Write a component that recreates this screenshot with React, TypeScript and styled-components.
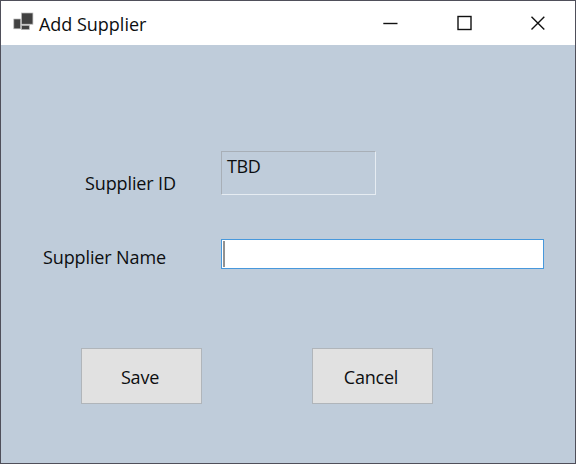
import React, { useState } from 'react';
import styled, { createGlobalStyle } from 'styled-components';

const GlobalStyle = createGlobalStyle`
  * { box-sizing: border-box; }
  html, body { margin: 0; padding: 0; overflow: hidden; }
  body, input, button { font-family: "Open Sans", "Noto Sans", sans-serif; font-size: 18px; color: #0c0e10; }
`;

const Window = styled.div`
  width: 576px;
  height: 464px;
  display: flex;
  flex-direction: column;
  background: #bfccda;
  border: 1px solid #4f4f5a;
`;

const TitleBar = styled.header`
  flex: none;
  height: 44px;
  display: flex;
  align-items: center;
  padding-left: 12px;
  background: #fff;
`;

const AppIcon = styled.svg`
  display: block;
  flex: none;
  width: 21px;
  height: 20px;
  margin: 0 5px 2px 0;
`;

const Title = styled.h1`
  margin: 0 auto 0 0;
  padding-top: 1px;
  font-size: 18px;
  font-weight: 400;
  line-height: 24px;
  white-space: nowrap;
  letter-spacing: -0.02px;
`;

const Controls = styled.div`
  display: flex;
  height: 100%;
`;

const ControlButton = styled.button`
  width: 73.5px;
  height: 44px;
  padding: 0;
  border: 0;
  background: transparent;
  svg { display: block; margin: -1px auto 0; }
`;

const Form = styled.form`
  flex: 1;
  display: flex;
  flex-direction: column;
  padding-top: 106px;
`;

const Row = styled.div<{ $indent: number; $height: number }>`
  display: flex;
  align-items: flex-start;
  height: ${(p) => p.$height}px;
  padding-left: ${(p) => p.$indent}px;
`;

const Label = styled.label<{ $width: number; $top: number }>`
  width: ${(p) => p.$width}px;
  flex: none;
  padding-top: ${(p) => p.$top}px;
  line-height: 24px;
  white-space: nowrap;
  letter-spacing: -0.12px;
`;

const ReadOnlyValue = styled.output`
  width: 155px;
  height: 44px;
  padding: 2px 5px;
  border: 1px solid;
  border-color: #a8afb7 #e6ecf2 #e6ecf2 #a8afb7;
  line-height: 24px;
  letter-spacing: -0.35px;
`;

const FieldFrame = styled.div`
  display: flex;
  width: 323px;
  height: 30px;
  padding: 1px;
  border: 1px solid #4798dc;
  background: #fff;
`;

const Caret = styled.span`
  flex: none;
  width: 2px;
  height: 26px;
  background: #929292;
`;

const TextInput = styled.input`
  flex: 1;
  min-width: 0;
  padding: 0 2px;
  border: 0;
  outline: 0;
  background: transparent;
`;

const Actions = styled.div`
  display: flex;
  gap: 110px;
  padding-left: 80px;
`;

const ActionButton = styled.button`
  width: 121px;
  height: 56px;
  padding: 2px 3px 0 0;
  border: 1px solid #b0b5ba;
  background: #e1e1e1;
  line-height: 24px;
  letter-spacing: -0.2px;
`;

export default function App() {
  const [name, setName] = useState('');
  return (
    <>
      <GlobalStyle />
      <Window>
        <TitleBar>
          <AppIcon viewBox="0 0 21 20" aria-hidden="true">
            <g fill="#414141" stroke="#b9b9b9" strokeWidth="0.7">
              <rect x="0.8" y="7" width="6.8" height="9.8" />
              <rect x="8.5" y="1" width="11.4" height="11.2" />
              <rect x="8.5" y="13.4" width="7.8" height="4.2" />
            </g>
          </AppIcon>
          <Title>Add Supplier</Title>
          <Controls>
            <ControlButton type="button" aria-label="Minimize">
              <svg width="16" height="16" viewBox="0 0 16 16"><path d="M0.3 8.5H14.5" stroke="#111" strokeWidth="1.4" /></svg>
            </ControlButton>
            <ControlButton type="button" aria-label="Maximize">
              <svg width="16" height="16" viewBox="0 0 16 16"><rect x="1" y="1.5" width="13" height="13" fill="none" stroke="#111" strokeWidth="1.4" /></svg>
            </ControlButton>
            <ControlButton type="button" aria-label="Close">
              <svg width="16" height="16" viewBox="0 0 16 16"><path d="M1.5 1.7L14.3 14.5M14.3 1.7L1.5 14.5" stroke="#111" strokeWidth="1.4" /></svg>
            </ControlButton>
          </Controls>
        </TitleBar>
        <Form onSubmit={(e) => e.preventDefault()}>
          <Row $indent={84} $height={88}>
            <Label $width={136} $top={20}>Supplier ID</Label>
            <ReadOnlyValue>TBD</ReadOnlyValue>
          </Row>
          <Row $indent={42} $height={109}>
            <Label htmlFor="supplier-name" $width={178} $top={6}>Supplier Name</Label>
            <FieldFrame>
              <Caret />
              <TextInput id="supplier-name" value={name} onChange={(e) => setName(e.target.value)} />
            </FieldFrame>
          </Row>
          <Actions>
            <ActionButton type="submit">Save</ActionButton>
            <ActionButton type="button">Cancel</ActionButton>
          </Actions>
        </Form>
      </Window>
    </>
  );
}
